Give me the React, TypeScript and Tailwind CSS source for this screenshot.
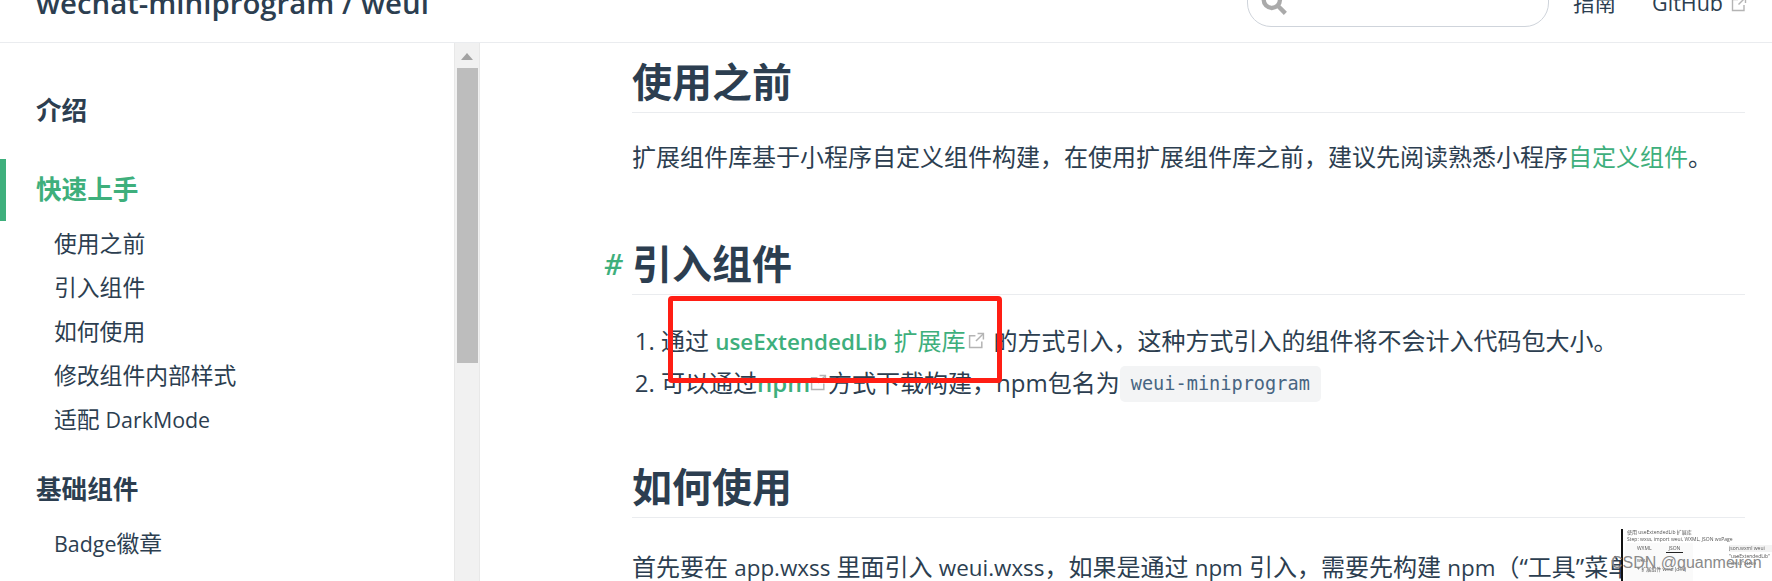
const CJK = "font-['Open_Sans','Noto_Sans_CJK_SC',sans-serif]";

const ExternalIcon = ({ className }: { className: string }) => (
  <svg viewBox="0 0 16 16" fill="none" stroke="#b4b4b4" strokeWidth="1.4" className={className}>
    <path d="M13 9v5.5H1.5v-11H7" />
    <path d="M9 1.5h5.5V7" />
    <path d="M14.2 1.8 7.5 8.5" />
  </svg>
);

const subItems = [
  { cn: '使用之前' },
  { cn: '引入组件' },
  { cn: '如何使用' },
  { cn: '修改组件内部样式' },
  { cn: '适配 ', en: 'DarkMode' },
];

const SideItem = ({ cn, en }: { cn?: string; en?: string }) => (
  <a className="block h-[44px] pl-[54px] text-[22.8px] leading-[46px]">
    {cn}
    {en && <span className="text-[21.4px]">{en}</span>}
  </a>
);

const Sidebar = () => (
  <aside className="flex h-full w-[480px] shrink-0">
    <nav className="w-[454px] pt-[37px]">
      <p className="h-[62px] pl-[36px] text-[25.6px] font-bold leading-[62px]">介绍</p>
      <p className="mt-[17px] h-[62px] border-l-[6px] border-[#3eaf7c] pl-[30px] text-[25.6px] font-bold leading-[62px] text-[#3eaf7c]">
        快速上手
      </p>
      {subItems.map((item) => (
        <SideItem key={item.cn} cn={item.cn} en={item.en} />
      ))}
      <p className="mt-[18px] h-[62px] pl-[36px] text-[25.6px] font-bold leading-[62px]">基础组件</p>
      <a className="block h-[44px] pl-[54px] text-[22.8px] leading-[46px]">
        <span className="text-[21.4px]">Badge</span>徽章
      </a>
    </nav>
    {/* 滚动条 */}
    <div className="flex w-[26px] flex-col items-center border-x border-[#e8e8e8] bg-[#f1f1f1]">
      <div className="mt-[10px] h-0 w-0 border-x-[6px] border-b-[7px] border-x-transparent border-b-[#a3a3a3]" />
      <div className="mt-[8px] h-[295px] w-[21px] bg-[#bdbdbd]" />
    </div>
  </aside>
);

const H2 = ({ children, className }: { children: string; className: string }) => (
  <h2 className={`relative h-[61px] border-b border-[#eaecef] text-[40px] font-bold leading-[60px] ${className}`}>
    {children}
  </h2>
);

// 拉丁字符比中文略小一点
const En = ({ children }: { children: string }) => <span className="text-[22.4px]">{children}</span>;

const App = () => (
  <div className={`relative flex h-[581px] w-[1772px] flex-col overflow-hidden bg-white text-[#2c3e50] ${CJK}`}>
    <header className="flex h-[43px] shrink-0 items-end border-b border-[#eaecef]">
      <div className="mb-[19px] ml-[36px] text-[29.4px] font-semibold leading-[40px]">wechat-miniprogram / weui</div>
      <div className="ml-auto flex items-end">
        <div className="mb-[15px] flex h-[50px] w-[302px] items-end rounded-b-[24px] border border-[#cfd4db] pb-[11px] pl-[13px]">
          <svg viewBox="0 0 24 24" fill="none" stroke="#aaaaaa" strokeWidth="4" className="h-[26px] w-[26px]">
            <circle cx="10" cy="10" r="7.5" />
            <path d="m15.5 15.5 7 7" />
          </svg>
        </div>
        <a className="mb-[24px] ml-[24px] text-[21.5px] leading-[30px]">指南</a>
        <a className="mb-[24px] ml-[36px] text-[21.5px] leading-[30px]">GitHub</a>
        <ExternalIcon className="mb-[30px] ml-[8px] h-[16px] w-[16px]" />
        <div className="w-[25px]" />
      </div>
    </header>

    <div className="flex min-h-0 flex-1">
      <Sidebar />
      <main className="min-w-0 flex-1 pl-[152px] pr-[27px] pt-[9px] text-[24px]">
        <H2 className="">使用之前</H2>
        <p className="mt-[24px] h-[40px] leading-[40px]">
          扩展组件库基于小程序自定义组件构建，在使用扩展组件库之前，建议先阅读熟悉小程序
          <a className="text-[#3eaf7c]">自定义组件</a>。
        </p>
        <H2 className="mt-[57px]">引入组件</H2>
        <ol className="mt-[25px] list-decimal pl-[29px] leading-[42px]">
          <li className="h-[42px]">
            通过 <a className="text-[22.4px] font-semibold text-[#3eaf7c]">useExtendedLib</a>{' '}
            <a className="text-[#3eaf7c]">扩展库</a>
            <ExternalIcon className="ml-[3px] mr-[8px] inline h-[17px] w-[17px] align-[1px]" />
            的方式引入，这种方式引入的组件将不会计入代码包大小。
          </li>
          <li className="h-[42px]">
            可以通过<a className="font-semibold text-[#3eaf7c]">npm</a>
            <ExternalIcon className="mr-[1px] inline h-[17px] w-[17px] align-[1px]" />
            方式下载构建，npm包名为
            <code className="inline-block rounded-[5px] bg-[#f3f4f5] px-[11px] align-[2px] font-['DejaVu_Sans_Mono',monospace] text-[18.6px] leading-[36px] text-[#476582]">
              weui-miniprogram
            </code>
          </li>
        </ol>
        <H2 className="mt-[53px]">如何使用</H2>
        <p className="mt-[29px] whitespace-nowrap leading-[40px]">
          首先要在 <En>app.wxss</En> 里面引入 <En>weui.wxss</En>，如果是通过 <En>npm</En> 引入，需要先构建 <En>npm</En>（“工具”菜单
        </p>
      </main>
    </div>

    <span className="absolute left-[604px] top-[244px] text-[29px] font-semibold italic leading-[40px] text-[#3eaf7c]">#</span>

    {/* 红色标注框 */}
    <div className="absolute left-[668px] top-[296px] h-[87px] w-[334px] rounded-[4px] border-[5px] border-[#ff1e14]" />

    {/* 右下角缩略图 */}
    <div className="absolute left-[1621px] top-[529px] flex h-[52px] w-[151px] flex-col border-l-2 border-[#111111] bg-white pl-[2px] text-[5px] leading-[7px] text-[#555555] blur-[0.4px]">
      <p className="whitespace-nowrap pl-[2px]">使用 useExtendedLib 扩展库</p>
      <p className="whitespace-nowrap pl-[2px]">Step: wxss, import weui, WXML, JSON wxPage</p>
      <div className="flex min-h-0 flex-1">
        <div className="w-[68px] bg-[#fafafa] pl-[12px] pt-[2px]">
          <div className="flex gap-[14px]">
            <span>WXML</span>
            <span className="border-b border-[#222222] px-[3px]">JSON</span>
          </div>
          <p className="mt-[4px]">weui</p>
          <p className="mt-[2px] whitespace-nowrap">+ 扩展组件 weui (dev)</p>
        </div>
        <div className="ml-[36px] flex-1 overflow-hidden pt-[2px]">
          <p className="whitespace-nowrap bg-[#f3f3f3]">json.wxml weui</p>
          <p className="mt-[1px] whitespace-nowrap">"useExtendedLib"</p>
          <p className="whitespace-nowrap">"weui": true</p>
        </div>
      </div>
    </div>
    <span className="absolute left-[1611px] top-[551px] whitespace-nowrap font-['Liberation_Sans',sans-serif] text-[16px] leading-[24px] text-[#8a8a8a]">
      CSDN @quanmeiren
    </span>
  </div>
);

export default App;
